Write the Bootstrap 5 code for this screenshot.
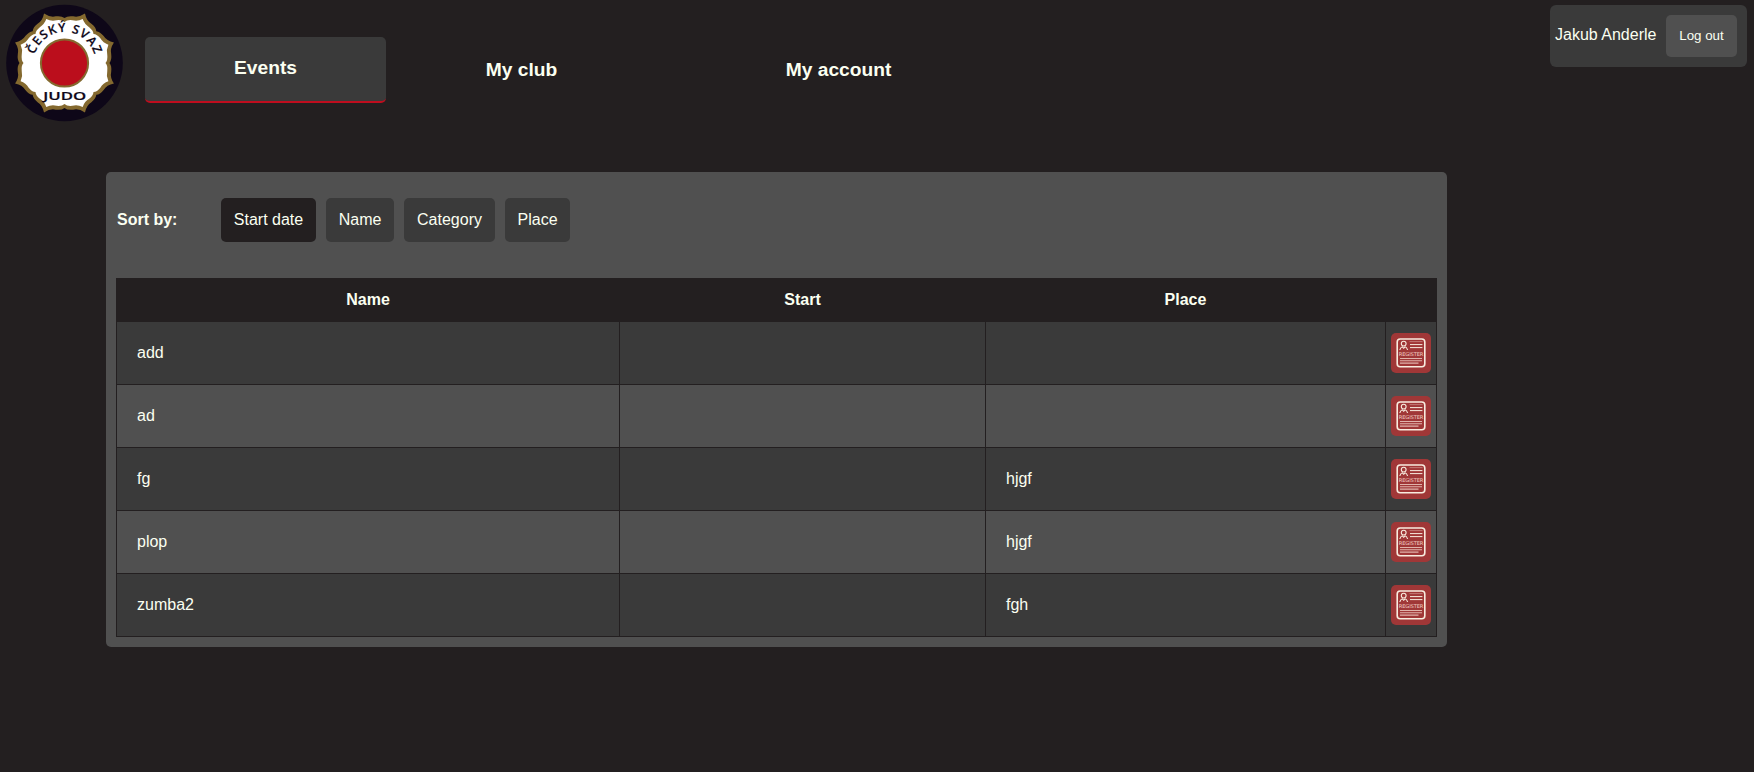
<!DOCTYPE html>
<html lang="en">
<head>
<meta charset="utf-8">
<title>Events</title>
<link href="https://cdn.jsdelivr.net/npm/bootstrap@5.3.0/dist/css/bootstrap.min.css" rel="stylesheet">
<style>
:root{--ink:#231f20;--dark:#3a3a3a;--mid:#505050;--light:#fbfff1}
body{background:var(--ink);color:var(--light);font:16px/18px "Liberation Sans",Arial,sans-serif;min-height:772px;overflow:hidden}
.top{height:172px}
.logo{width:118px;height:118px;margin:4px 0 0 5px}
.tabs{margin:37px 0 0 22px;gap:15px}
.tab{height:66px;width:241px;padding:0;border-radius:5px;font-size:19.2px;line-height:22px;font-weight:700;color:var(--light);display:flex;align-items:center;justify-content:center;border-bottom:2px solid transparent}
.tab:hover{color:var(--light)}
.tab{padding-top:2px}
.tab.active{background:var(--dark);border-color:#bf0d1e;padding-top:0;padding-bottom:2px}
.tab.wide{width:363px}
.user{width:197px;height:62px;margin:5px 7px 0 0;padding:10px 10px 10px 5px;background:var(--dark);border-radius:6px}
.user span{margin-top:11px}
.btn{--bs-btn-border-width:0;--bs-btn-border-radius:5px;--bs-btn-color:var(--light);--bs-btn-hover-color:var(--light);padding:13px 12.8px;line-height:18px}
.logout{background:var(--mid);height:42px;width:71px;font-size:13.33px;padding:0}
.panel{width:1341px;height:475px;margin-left:106px;background:var(--mid);border-radius:5px;padding:26px 10px 0}
.sort{height:80px}
.sort strong{width:105px;padding:13px 0 0 1px}
.sort .btn{background:var(--dark);height:44px}
.sort .btn.active{background:var(--ink)}
.events{border-collapse:collapse;table-layout:fixed;width:1321px}
.events th,.events td{border:1px solid var(--ink)}
.events th{background:var(--ink);height:43px;text-align:center;padding:0}
.events td{height:63px;padding:0 20px;background:var(--mid)}
.events tr:nth-child(odd) td{background:var(--dark)}
.events td:last-child{padding:0 5px}
.reg{display:block;width:40px;height:40px;padding:0;background:#a03737}
.reg svg{display:block}
</style>
</head>
<body>
<header class="top d-flex align-items-start">
  <svg class="logo" viewBox="0 0 118 118">
    <circle cx="59.5" cy="59" r="58.3" fill="#0e0718"/>
    <g id="petals"></g>
    <circle cx="59.5" cy="59" r="23.6" fill="#bb0e1c" stroke="#84692f" stroke-width="2"/>
    <path id="arc" d="M28.5 66V59A31 31 0 0 1 90.5 59V66" fill="none"/>
    <text font-family="Open Sans,sans-serif" font-size="12.3" font-weight="600" fill="#0e0718" stroke="#0e0718" stroke-width=".2"><textPath href="#arc" startOffset="50%" text-anchor="middle" textLength="80">ČESKÝ SVAZ</textPath></text>
    <text x="59.8" y="96" font-family="Open Sans,sans-serif" font-size="11.5" font-weight="600" fill="#0e0718" stroke="#0e0718" stroke-width=".2" text-anchor="middle" textLength="43" lengthAdjust="spacingAndGlyphs">JUDO</text>
  </svg>
  <nav class="tabs d-flex">
    <a class="nav-link tab active">Events</a>
    <a class="nav-link tab">My club</a>
    <a class="nav-link tab wide">My account</a>
  </nav>
  <div class="user d-flex justify-content-between ms-auto"><span>Jakub Anderle</span><button class="btn logout">Log out</button></div>
</header>
<main class="panel">
  <div class="sort d-flex align-items-start">
    <strong>Sort by:</strong>
    <div class="d-flex" style="gap:10px"><button class="btn active">Start date</button><button class="btn">Name</button><button class="btn">Category</button><button class="btn">Place</button></div>
  </div>
  <table class="events">
    <colgroup><col style="width:503px"><col style="width:366px"><col style="width:400px"><col style="width:51px"></colgroup>
    <thead><tr><th>Name</th><th>Start</th><th>Place</th><th></th></tr></thead>
    <tbody id="rows"></tbody>
  </table>
</main>
<script src="https://cdn.jsdelivr.net/npm/bootstrap@5.3.0/dist/js/bootstrap.bundle.min.js"></script>
<script>
const icon = `<svg width="40" height="40" viewBox="0 0 40 40" fill="none" stroke="#f8ecdf">
<rect x="6.2" y="6" width="27.6" height="27.8" rx="3" stroke-width="1.6"/>
<circle cx="12.7" cy="10.6" r="2.4" stroke-width="1.1"/>
<path d="M8.8 17q.6-2.6 3-3.4M16.6 17q-.6-2.6-3-3.4M11 13.6l1.7 1.6 1.7-1.6" stroke-width="1.1"/>
<path d="M18.5 8.6h13" stroke-width=".6" stroke="#d9a59d"/>
<path d="M19 11.6h12.4M19 14.6h12.4" stroke-width="1"/>
<path d="M9 25.5h22M9 27.8h22M9 30.1h18.5" stroke-width="1.1" stroke="#e0b3ab"/>
<text x="20.1" y="22.9" font-family="DejaVu Sans,sans-serif" font-size="5.2" fill="#f0cfc5" stroke="none" text-anchor="middle" textLength="24.5">REGISTER</text></svg>`;
document.getElementById('rows').innerHTML = [['add',''],['ad',''],['fg','hjgf'],['plop','hjgf'],['zumba2','fgh']]
  .map(([n,p]) => `<tr><td>${n}</td><td></td><td>${p}</td><td><button class="btn reg" aria-label="Register">${icon}</button></td></tr>`).join('');
// Blossom badge: eight points joined by bracket-shaped edges
const pt = (r,a) => (59.5 + r*Math.cos(a*Math.PI/180)).toFixed(2) + ' ' + (59 + r*Math.sin(a*Math.PI/180)).toFixed(2);
const petal = (tip, mid, bump) => {
  let d = 'M' + pt(tip, -22.5);
  for (let i = 0; i < 8; i++) {
    const a = -22.5 + i*45;
    d += `Q${pt(mid,a+5)} ${pt(bump,a+12)}Q${pt(bump,a+19)} ${pt(bump-2.5,a+22.5)}Q${pt(bump,a+26)} ${pt(bump,a+33)}Q${pt(mid,a+40)} ${pt(tip,a+45)}`;
  }
  return d + 'Z';
};
document.getElementById('petals').innerHTML = `<path d="${petal(53.5,47.5,47.5)}" fill="#84692f"/><path d="${petal(47.5,43.5,43.5)}" fill="#fff"/>`;
</script>
</body>
</html>
